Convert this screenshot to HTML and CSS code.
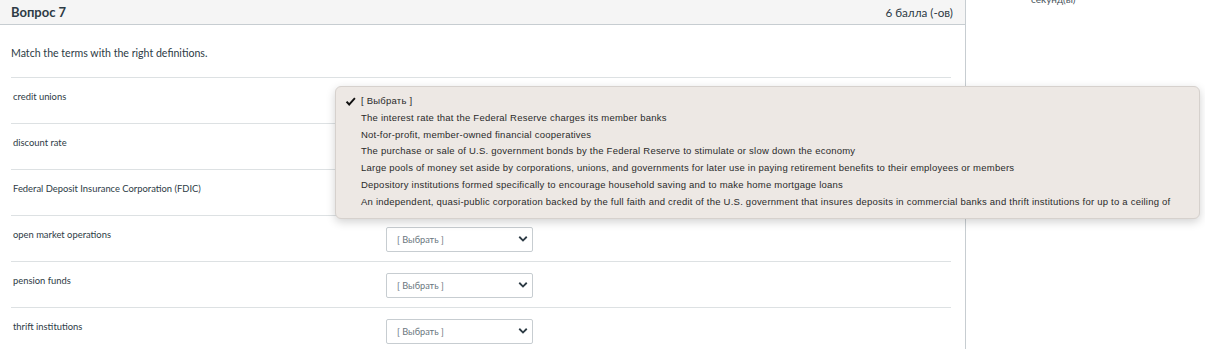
FILE: index.html
```html
<!DOCTYPE html>
<html lang="ru">
<head>
    <meta charset="UTF-8">
    <meta name="viewport" content="width=device-width, initial-scale=1.0">
    <title>Вопрос 7</title>
    <link rel="stylesheet" href="styles.css">
</head>
<body>
    <div class="page">
        <div class="question">
            <div class="question-header">
                <span class="question-title">Вопрос 7</span>
                <span class="question-points">6 балла (-ов)</span>
            </div>
            <div class="question-text">Match the terms with the right definitions.</div>

            <div class="answers">
                <div class="answer-row">
                    <span class="answer-label">credit unions</span>
                </div>
                <div class="answer-row">
                    <span class="answer-label">discount rate</span>
                </div>
                <div class="answer-row">
                    <span class="answer-label">Federal Deposit Insurance Corporation (FDIC)</span>
                </div>
                <div class="answer-row">
                    <span class="answer-label">open market operations</span>
                    <div class="select-box">
                        <span>[ Выбрать ]</span>
                        <svg class="chevron" width="10" height="7" viewBox="0 0 10 7"><path d="M0.6 1.4 L1.9 0.1 L5 3.2 L8.1 0.1 L9.4 1.4 L5 5.8 Z" fill="#2d3b45"/></svg>
                    </div>
                </div>
                <div class="answer-row">
                    <span class="answer-label">pension funds</span>
                    <div class="select-box">
                        <span>[ Выбрать ]</span>
                        <svg class="chevron" width="10" height="7" viewBox="0 0 10 7"><path d="M0.6 1.4 L1.9 0.1 L5 3.2 L8.1 0.1 L9.4 1.4 L5 5.8 Z" fill="#2d3b45"/></svg>
                    </div>
                </div>
                <div class="answer-row">
                    <span class="answer-label">thrift institutions</span>
                    <div class="select-box">
                        <span>[ Выбрать ]</span>
                        <svg class="chevron" width="10" height="7" viewBox="0 0 10 7"><path d="M0.6 1.4 L1.9 0.1 L5 3.2 L8.1 0.1 L9.4 1.4 L5 5.8 Z" fill="#2d3b45"/></svg>
                    </div>
                </div>
            </div>
        </div>

        <div class="sidebar">
            <div class="timer">секунд(ы)</div>
        </div>
    </div>

    <!-- open native dropdown menu -->
    <ul class="dropdown">
        <li class="selected">
            <svg class="check" width="11" height="10" viewBox="0 0 11 10"><path d="M0.8 5.3 L2.3 3.9 L4.2 6 L9.2 0.4 L10.6 1.7 L4.2 9 Z" fill="#111"/></svg>
            [ Выбрать ]
        </li>
        <li>The interest rate that the Federal Reserve charges its member banks</li>
        <li>Not-for-profit, member-owned financial cooperatives</li>
        <li>The purchase or sale of U.S. government bonds by the Federal Reserve to stimulate or slow down the economy</li>
        <li>Large pools of money set aside by corporations, unions, and governments for later use in paying retirement benefits to their employees or members</li>
        <li>Depository institutions formed specifically to encourage household saving and to make home mortgage loans</li>
        <li>An independent, quasi-public corporation backed by the full faith and credit of the U.S. government that insures deposits in commercial banks and thrift institutions for up to a ceiling of</li>
    </ul>
</body>
</html>
```

FILE: styles.css
```css
body {
    margin: 0;
    font-family: Lato, "Open Sans", sans-serif;
    color: #2d3b45;
    background-color: #fff;
    overflow: hidden;
}
.page {
    display: flex;
    height: 349px;
}
.question {
    width: 965px;
    border-right: 1px solid #c7cdd1;
    flex-shrink: 0;
}
.question-header {
    height: 24px;
    display: flex;
    align-items: center;
    justify-content: space-between;
    padding: 0 12px 0 11px;
    background-color: #f5f5f5;
    border-bottom: 1px solid #c7cdd1;
}
.question-title {
    font-size: 13px;
    font-weight: bold;
}
.question-points {
    font-size: 11.7px;
}
.question-text {
    font-size: 10.6px;
    padding: 22px 11px 0;
    height: 30px;
}
.answers {
    margin: 0 14px 0 11px;
    border-top: 1px solid #dde1e3;
}
.answer-row {
    height: 45px;
    display: flex;
    align-items: center;
    border-bottom: 1px solid #dde1e3;
    padding-left: 2px;
}
.answer-label {
    width: 373px;
    font-size: 9.4px;
    padding-bottom: 8px;
}
.select-box {
    width: 147px;
    height: 25px;
    border: 1px solid #c7cdd1;
    border-radius: 2px;
    display: flex;
    align-items: center;
    justify-content: space-between;
    padding: 0 4px 0 10px;
    box-sizing: border-box;
    font-size: 9.2px;
    color: #6b7780;
    margin-top: 1px;
}
.select-box span {
    margin-top: 1px;
}
.sidebar {
    flex: 1;
    padding-left: 65px;
}
.timer {
    font-size: 10px;
    margin-top: -7px;
    color: #4a5660;
}
.dropdown {
    position: absolute;
    left: 335px;
    top: 86px;
    width: 838px;
    margin: 0;
    padding: 6px 0 7px 25px;
    list-style: none;
    background-color: #ede8e4;
    border: 1px solid #d6d1cd;
    border-radius: 6px;
    box-shadow: 0 3px 10px rgba(0, 0, 0, 0.18);
    font-family: "Liberation Sans", Arial, sans-serif;
    font-size: 9.5px;
    letter-spacing: 0.23px;
    color: #2a2a2a;
}
.dropdown li {
    height: 16.8px;
    line-height: 16.8px;
    white-space: nowrap;
    position: relative;
}
.check {
    position: absolute;
    left: -16px;
    top: 4px;
}
```
